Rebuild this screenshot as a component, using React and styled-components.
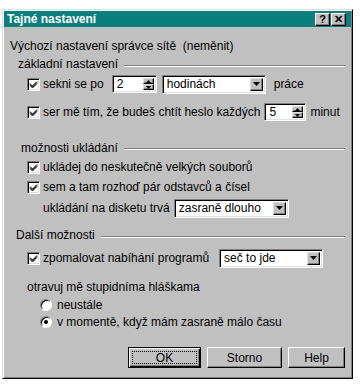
import React from 'react';
import styled, { createGlobalStyle } from 'styled-components';

const Global = createGlobalStyle`
  html, body { margin: 0; padding: 0; background: #fff; }
  body {
    font-family: "Liberation Sans", Arial, sans-serif;
    font-size: 12px;
    color: #000;
  }
  * { box-sizing: border-box; }
`;

const Dialog = styled.div`
  width: 351px;
  height: 370px;
  margin: 9px 0 0 2px;
  background: #c0c0c0;
  border: 1px solid;
  border-color: #dfdfdf #000 #000 #dfdfdf;
  box-shadow: inset 1px 1px #fff, inset -1px -1px #808080;
  padding: 1px 1px 2px 1px;
  display: flex;
  flex-direction: column;
`;

const TitleBar = styled.div`
  height: 16px;
  background: #0a7f7e;
  display: flex;
  align-items: center;
  justify-content: space-between;
  padding: 0 5px 0 3px;
`;

const Title = styled.span`
  color: #fff;
  font-weight: bold;
  font-size: 12px;
`;

const TitleButtons = styled.div`
  display: flex;
  gap: 1px;
`;

const TitleButton = styled.div`
  width: 15px;
  height: 13px;
  background: #c0c0c0;
  border: 1px solid;
  border-color: #fff #000 #000 #fff;
  box-shadow: inset -1px -1px #808080;
  display: flex;
  align-items: center;
  justify-content: center;
  font-weight: bold;
  font-size: 11px;
  line-height: 1;
`;

const Body = styled.div`
  display: flex;
  flex-direction: column;
  padding-top: 9px;
  flex: 1;
`;

const Row = styled.div`
  display: flex;
  align-items: center;
  height: ${p => p.$h || 20}px;
  margin-top: ${p => p.$mt || 0}px;
  padding-left: ${p => p.$pl || 0}px;
  white-space: nowrap;
`;

const Label = styled.span`
  margin-left: ${p => p.$ml || 0}px;
`;

const GroupHead = styled.div`
  display: flex;
  align-items: center;
  height: ${p => p.$h || 18}px;
  margin-top: ${p => p.$mt || 0}px;
  padding-left: ${p => p.$pl || 0}px;
  padding-right: 6px;
  white-space: nowrap;
`;

const GroupLine = styled.div`
  flex: 1;
  margin-left: 6px;
  margin-top: 3px;
  height: 2px;
  border-top: 1px solid #808080;
  border-bottom: 1px solid #fff;
`;

const CheckBox = styled.div`
  width: 13px;
  height: 13px;
  background: #fff;
  border: 1px solid;
  border-color: #808080 #fff #fff #808080;
  box-shadow: inset 1px 1px #000, inset -1px -1px #dfdfdf;
  display: flex;
  align-items: center;
  justify-content: center;
  flex-shrink: 0;
  margin-right: 3px;
`;

const Radio = styled.div`
  width: 12px;
  height: 12px;
  border-radius: 50%;
  background: #fff;
  border: 1px solid;
  border-color: #808080 #fff #fff #808080;
  box-shadow: inset 1px 1px #000;
  display: flex;
  align-items: center;
  justify-content: center;
  margin-right: 5px;
  flex-shrink: 0;
`;

const RadioDot = styled.div`
  width: 4px;
  height: 4px;
  border-radius: 50%;
  background: #000;
`;

const Field = styled.div`
  width: ${p => p.$w}px;
  height: ${p => p.$h || 19}px;
  margin-left: ${p => p.$ml || 0}px;
  margin-right: ${p => p.$mr || 0}px;
  background: #fff;
  border: 1px solid;
  border-color: #808080 #fff #fff #808080;
  box-shadow: inset 1px 1px #000, inset -1px -1px #dfdfdf;
  padding: 2px;
  display: flex;
  align-items: stretch;
  flex-shrink: 0;
`;

const FieldValue = styled.span`
  flex: 1;
  display: flex;
  align-items: center;
  padding-left: 2px;
  overflow: hidden;
`;

const SpinButtons = styled.div`
  width: 11px;
  display: flex;
  flex-direction: column;
`;

const RaisedButton = styled.div`
  flex: 1;
  background: #c0c0c0;
  border: 1px solid;
  border-color: #dfdfdf #000 #000 #dfdfdf;
  box-shadow: inset -1px -1px #808080;
  display: flex;
  align-items: center;
  justify-content: center;
`;

const DropButton = styled(RaisedButton)`
  flex: 0 0 13px;
`;

const Footer = styled.div`
  display: flex;
  justify-content: flex-end;
  gap: 6px;
  padding-right: 6px;
  margin-top: 17px;
`;

const PushButton = styled.div`
  width: ${p => p.$w}px;
  height: 21px;
  background: #c0c0c0;
  border: 1px solid;
  border-color: ${p => (p.$default ? '#000' : '#fff #000 #000 #fff')};
  box-shadow: ${p =>
    p.$default
      ? 'inset 1px 1px #fff, inset -1px -1px #000, inset -2px -2px #808080'
      : 'inset -1px -1px #808080'};
  display: flex;
  align-items: center;
  justify-content: center;
  padding: 3px;
`;

const Focus = styled.div`
  flex: 1;
  align-self: stretch;
  border: 1px dotted #000;
  display: flex;
  align-items: center;
  justify-content: center;
`;

const Check = () => (
  <svg width="9" height="9" viewBox="0 0 9 9">
    <path d="M1 3.5 L3.5 6 L8 1.5 M1 4.5 L3.5 7 L8 2.5 M1 5.5 L3.5 8 L8 3.5" stroke="#000" strokeWidth="1" fill="none" />
  </svg>
);

const Arrow = ({ up, w = 7 }) => (
  <svg width={w} height={Math.ceil(w / 2)} viewBox={`0 0 ${w} ${Math.ceil(w / 2)}`}>
    {up ? (
      <polygon points={`0,${Math.ceil(w / 2)} ${w},${Math.ceil(w / 2)} ${w / 2},0`} fill="#000" />
    ) : (
      <polygon points={`0,0 ${w},0 ${w / 2},${Math.ceil(w / 2)}`} fill="#000" />
    )}
  </svg>
);

const Spin = ({ value, w, ml, mr }) => (
  <Field $w={w} $ml={ml} $mr={mr} $h={18}>
    <FieldValue>{value}</FieldValue>
    <SpinButtons>
      <RaisedButton><Arrow up w={5} /></RaisedButton>
      <RaisedButton><Arrow w={5} /></RaisedButton>
    </SpinButtons>
  </Field>
);

const Select = ({ value, w, ml, mr }) => (
  <Field $w={w} $ml={ml} $mr={mr}>
    <FieldValue>{value}</FieldValue>
    <DropButton><Arrow w={7} /></DropButton>
  </Field>
);

export default function App() {
  return (
    <>
      <Global />
      <Dialog>
        <TitleBar>
          <Title>Tajné nastavení</Title>
          <TitleButtons>
            <TitleButton>?</TitleButton>
            <TitleButton>✕</TitleButton>
          </TitleButtons>
        </TitleBar>
        <Body>
          <Row $h={19} $pl={6}>Výchozí nastavení správce sítě&nbsp;&nbsp;(neměnit)</Row>
          <GroupHead $pl={14}>základní nastavení<GroupLine /></GroupHead>
          <Row $h={22} $pl={23}>
            <CheckBox><Check /></CheckBox>
            <Label>sekni se po</Label>
            <Spin value="2" w={45} ml={8} />
            <Select value="hodinách" w={104} ml={5} mr={8} />
            <Label>práce</Label>
          </Row>
          <Row $h={22} $mt={6} $pl={23}>
            <CheckBox><Check /></CheckBox>
            <Label>ser mě tím, že budeš chtít heslo každých</Label>
            <Spin value="5" w={42} ml={4} mr={4} />
            <Label>minut</Label>
          </Row>
          <GroupHead $h={19} $mt={15} $pl={17}>možnosti ukládání<GroupLine /></GroupHead>
          <Row $pl={23}>
            <CheckBox><Check /></CheckBox>
            <Label>ukládej do neskutečně velkých souborů</Label>
          </Row>
          <Row $pl={23}>
            <CheckBox><Check /></CheckBox>
            <Label>sem a tam rozhoď pár odstavců a čísel</Label>
          </Row>
          <Row $h={22} $pl={39}>
            <Label>ukládání na disketu trvá</Label>
            <Select value="zasraně dlouho" w={115} ml={4} />
          </Row>
          <GroupHead $mt={7} $pl={12}>Další možnosti<GroupLine /></GroupHead>
          <Row $h={22} $mt={3} $pl={23}>
            <CheckBox><Check /></CheckBox>
            <Label>zpomalovat nabíhání programů</Label>
            <Select value="seč to jde" w={104} ml={10} />
          </Row>
          <Row $h={18} $mt={9} $pl={23}>otravuj mě stupidníma hláškama</Row>
          <Row $h={18} $pl={36}>
            <Radio />
            <Label>neustále</Label>
          </Row>
          <Row $h={16} $pl={36}>
            <Radio><RadioDot /></Radio>
            <Label>v momentě, když mám zasraně málo času</Label>
          </Row>
          <Footer>
            <PushButton $w={73} $default><Focus>OK</Focus></PushButton>
            <PushButton $w={75}>Storno</PushButton>
            <PushButton $w={57}>Help</PushButton>
          </Footer>
        </Body>
      </Dialog>
    </>
  );
}
